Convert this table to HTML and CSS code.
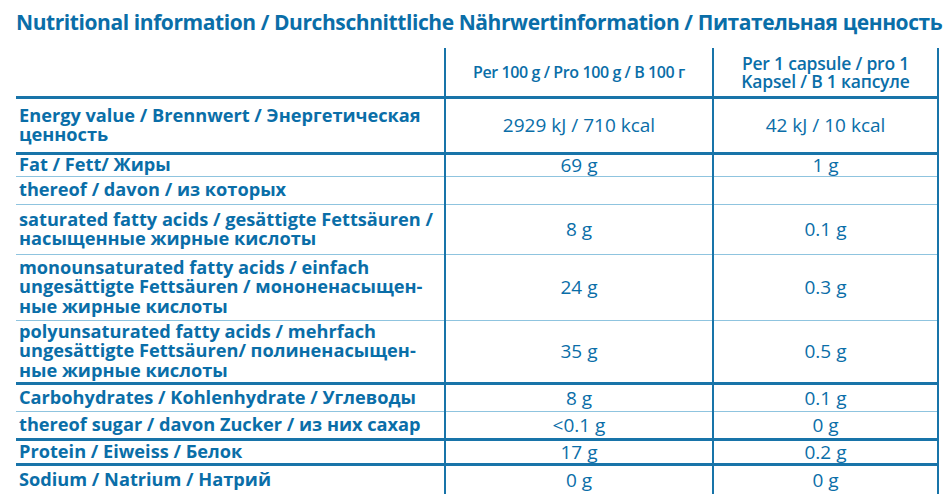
FILE: index.html
```html
<!DOCTYPE html>
<html>
<head>
<meta charset="utf-8">
<link rel="stylesheet" href="styles.css">
</head>
<body>
<div class="page">
  <h1 class="title">Nutritional information / Durchschnittliche Nährwertinformation / Питательная ценность</h1>
  <table class="nt">
    <colgroup><col class="c-label"><col class="c-v1"><col class="c-v2"></colgroup>
    <tr class="r-head thick">
      <td class="lbl"></td>
      <td class="hd hd1">Per 100 g / Pro 100 g / B 100 г</td>
      <td class="hd hd2">Per 1 capsule / pro 1<br>Kapsel / B 1 капсуле</td>
    </tr>
    <tr class="r-energy thick">
      <td class="lbl">Energy value / Brennwert / Энергетическая<br>ценность</td>
      <td class="val">2929 kJ / 710 kcal</td>
      <td class="val">42 kJ / 10 kcal</td>
    </tr>
    <tr class="r-fat thin">
      <td class="lbl">Fat / Fett/ Жиры</td>
      <td class="val">69 g</td>
      <td class="val">1 g</td>
    </tr>
    <tr class="r-thereof thin">
      <td class="lbl">thereof / davon / из которых</td>
      <td class="val"></td>
      <td class="val"></td>
    </tr>
    <tr class="r-sat thin">
      <td class="lbl">saturated fatty acids / gesättigte Fettsäuren /<br>насыщенные жирные кислоты</td>
      <td class="val">8 g</td>
      <td class="val">0.1 g</td>
    </tr>
    <tr class="r-mono thin">
      <td class="lbl">monounsaturated fatty acids / einfach<br>ungesättigte Fettsäuren / мононенасыщен-<br>ные жирные кислоты</td>
      <td class="val">24 g</td>
      <td class="val">0.3 g</td>
    </tr>
    <tr class="r-poly thick">
      <td class="lbl">polyunsaturated fatty acids / mehrfach<br>ungesättigte Fettsäuren/ полиненасыщен-<br>ные жирные кислоты</td>
      <td class="val">35 g</td>
      <td class="val">0.5 g</td>
    </tr>
    <tr class="r-carb thin">
      <td class="lbl">Carbohydrates / Kohlenhydrate / Углеводы</td>
      <td class="val">8 g</td>
      <td class="val">0.1 g</td>
    </tr>
    <tr class="r-sugar thick">
      <td class="lbl">thereof sugar / davon Zucker / из них сахар</td>
      <td class="val">&lt;0.1 g</td>
      <td class="val">0 g</td>
    </tr>
    <tr class="r-prot thick">
      <td class="lbl">Protein / Eiweiss / Белок</td>
      <td class="val">17 g</td>
      <td class="val">0.2 g</td>
    </tr>
    <tr class="r-sod last">
      <td class="lbl">Sodium / Natrium / Натрий</td>
      <td class="val">0 g</td>
      <td class="val">0 g</td>
    </tr>
  </table>
</div>
</body>
</html>
```

FILE: styles.css
```css
html, body {
  margin: 0;
  padding: 0;
  background: #ffffff;
}

.page {
  width: 950px;
  height: 504px;
  padding: 8px 0 0 16px;
  box-sizing: border-box;
  font-family: "Open Sans", "Liberation Sans", sans-serif;
  color: #0a6ea8;
}

.title {
  margin: 0;
  font-size: 21px;
  font-weight: 700;
  line-height: 28px;
  letter-spacing: -0.42px;
  white-space: nowrap;
  color: #0a6ea8;
}

.nt {
  margin-top: 12px;
  border-collapse: collapse;
  table-layout: fixed;
  width: 922px;
}

.c-label { width: 429px; }
.c-v1 { width: 268px; }
.c-v2 { width: 225px; }

.nt td {
  padding: 0;
  vertical-align: middle;
  border-right: 2px solid #1874a9;
  white-space: nowrap;
}

.nt td.lbl {
  padding-left: 3px;
  font-weight: 700;
  font-size: 18.2px;
  line-height: 19.5px;
}

.nt td.val {
  text-align: center;
  font-size: 19px;
  font-weight: 400;
  line-height: 20px;
}

.nt td.hd {
  text-align: center;
  font-weight: 600;
}

.hd1 {
  font-size: 16px;
  letter-spacing: -0.4px;
}

.hd2 {
  font-size: 17.5px;
  line-height: 18px;
  letter-spacing: -0.2px;
}

.nt tr.thick td { border-bottom: 3px solid #1874a9; }
.nt tr.thin td { border-bottom: 1px solid #8fc4df; }

.r-head { height: 49px; }
.r-energy { height: 56px; }
.r-fat { height: 23px; }
.r-thereof { height: 28px; }
.r-sat { height: 50px; }
.r-mono { height: 66px; }
.r-poly { height: 63px; }
.r-carb { height: 28px; }
.r-sugar { height: 28px; }
.r-prot { height: 25px; }
.r-sod { height: 30px; }
```
